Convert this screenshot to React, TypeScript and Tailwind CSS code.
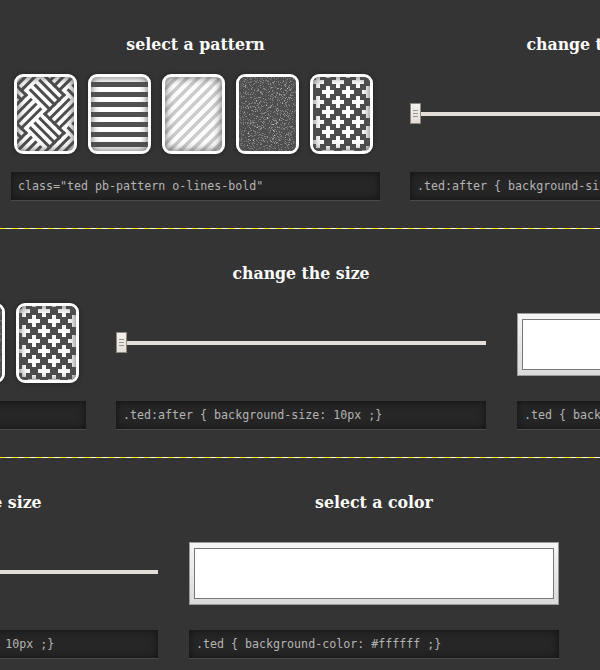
import type { ReactNode } from 'react';

// small seeded generator so the noise tile is the same on every run
function makeNoise(count: number) {
  const dots: { x: number; y: number; o: number }[] = [];
  let seed = 7;
  const next = () => {
    seed = (seed * 16807) % 2147483647;
    return seed / 2147483647;
  };
  for (let i = 0; i < count; i++) {
    dots.push({ x: Math.floor(next() * 57), y: Math.floor(next() * 74), o: 0.08 + next() * 0.3 });
  }
  return dots;
}

function Sayagata() {
  const u = 6.7;
  const lines: string[] = [];
  for (let i = -3; i <= 3; i++) {
    for (let j = -3; j <= 3; j++) {
      for (let k = 0; k < 4; k++) {
        if ((i + j + 100) % 2 === 0) {
          lines.push(`M${i * 4 * u} ${(j * 4 + k) * u} H${(i + 1) * 4 * u}`);
        } else {
          lines.push(`M${(i * 4 + k) * u} ${j * 4 * u} V${(j + 1) * 4 * u}`);
        }
      }
    }
  }
  return (
    <svg width="57" height="74" viewBox="0 0 57 74" className="block">
      <rect width="57" height="74" fill="#fff" />
      <g transform="translate(28 37) rotate(45)" stroke="#4d4d4d" strokeWidth="3" fill="none" strokeLinecap="square">
        {lines.map((d) => (
          <path key={d} d={d} />
        ))}
      </g>
    </svg>
  );
}

function Lines() {
  const rows = [5, 15, 25, 35, 45, 55, 65];
  return (
    <svg width="57" height="74" viewBox="0 0 57 74" className="block">
      <rect width="57" height="74" fill="#fff" />
      {rows.map((y) => (
        <rect key={y} x="0" y={y} width="57" height="5" fill="#505050" />
      ))}
    </svg>
  );
}

function Diagonal() {
  return (
    <svg width="57" height="74" viewBox="0 0 57 74" className="block">
      <rect width="57" height="74" fill="#fff" />
      <g stroke="#cbcbcb" strokeWidth="3.5">
        {Array.from({ length: 16 }, (_, i) => (
          <line key={i} x1={-90 + i * 11} y1="80" x2={-4 + i * 11} y2="-6" />
        ))}
      </g>
    </svg>
  );
}

function Noise() {
  return (
    <svg width="57" height="74" viewBox="0 0 57 74" className="block">
      <rect width="57" height="74" fill="#4e4e4e" />
      {makeNoise(1500).map((d, i) => (
        <rect key={i} x={d.x} y={d.y} width="1" height="1" fill="#fff" opacity={d.o} />
      ))}
    </svg>
  );
}

function Crosses() {
  const points: [number, number][] = [];
  for (let r = -1; r < 8; r++) {
    for (let c = 0; c < 4; c++) {
      points.push([(r + 2) % 2 === 0 ? 5 + c * 20 : 15 + c * 20, 5 + r * 10]);
    }
  }
  return (
    <svg width="57" height="74" viewBox="0 0 57 74" className="block">
      <rect width="57" height="74" fill="#4d4d4d" />
      {points.map(([x, y]) => (
        <path key={`${x}-${y}`} d={`M${x - 6} ${y - 2} h12 v4 h-12 z M${x - 2} ${y - 6} h4 v12 h-4 z`} fill="#fff" />
      ))}
    </svg>
  );
}

function Tile({ children }: { children: ReactNode }) {
  return (
    <div className="relative h-20 w-[63px] shrink-0 overflow-hidden rounded-[9px] border-[3px] border-white bg-[#555] shadow-[0_0_4px_rgba(0,0,0,0.4)]">
      {children}
      <div className="absolute inset-0 rounded-[6px] shadow-[inset_0_0_8px_rgba(80,80,80,0.95)]" />
    </div>
  );
}

function CodeBox({ children }: { children: ReactNode }) {
  return (
    <div className="h-[29px] overflow-hidden whitespace-pre border-b border-[#4a4a4a] bg-[#262626] pl-[7px] font-['DejaVu_Sans_Mono',monospace] text-[11.65px] leading-[28px] text-[#b4b4b4] shadow-[inset_0_0_8px_rgba(0,0,0,0.55)]">
      {children}
    </div>
  );
}

function Title({ children }: { children: ReactNode }) {
  return (
    <h2 className="flex h-[74px] justify-center pt-[32px] font-['DejaVu_Serif_Condensed','DejaVu_Serif',serif] text-[17.5px] font-bold leading-[24px] text-white">
      {children}
    </h2>
  );
}

function SizeSlider() {
  return (
    <div className="mt-[29px] flex w-full items-center">
      <div className="flex h-[21px] w-[11px] shrink-0 flex-col items-center justify-center gap-[2px] border border-[#8d8880] bg-gradient-to-b from-[#f4f1ee] to-[#e2ddd7]">
        <span className="h-px w-[5px] bg-[#99948c]" />
        <span className="h-px w-[5px] bg-[#99948c]" />
        <span className="h-px w-[5px] bg-[#99948c]" />
      </div>
      <div className="h-1 flex-1 bg-[#e4ded8]" />
    </div>
  );
}

function ColorSwatch() {
  return (
    <div className="mt-[10px] h-[63px] w-full border border-[#9a9a9a] bg-gradient-to-b from-[#f6f6f6] to-[#dadada] px-[4px] pt-[5px]">
      <div className="h-[51px] border border-[#777] bg-white" />
    </div>
  );
}

function Panels() {
  return (
    <>
      <div className="mr-[30px] w-[369px] shrink-0">
        <Title>select a pattern</Title>
        <div className="flex h-[98px] items-start gap-[11px] pl-[3px]">
          <Tile><Sayagata /></Tile>
          <Tile><Lines /></Tile>
          <Tile><Diagonal /></Tile>
          <Tile><Noise /></Tile>
          <Tile><Crosses /></Tile>
        </div>
        <CodeBox>{'class="ted pb-pattern o-lines-bold"'}</CodeBox>
      </div>
      <div className="mr-[31px] w-[370px] shrink-0">
        <Title>change the size</Title>
        <div className="flex h-[98px] items-start">
          <SizeSlider />
        </div>
        <CodeBox>{'.ted:after { background-size: 10px ;}'}</CodeBox>
      </div>
      <div className="w-[370px] shrink-0">
        <Title>select a color</Title>
        <div className="flex h-[98px] items-start">
          <ColorSwatch />
        </div>
        <CodeBox>{'.ted { background-color: #ffffff ;}'}</CodeBox>
      </div>
    </>
  );
}

function Row({ offset, line }: { offset: string; line?: boolean }) {
  return (
    <section className="flex h-[229px] flex-col overflow-hidden">
      <div className={`flex w-max flex-1 ${offset}`}>
        <Panels />
      </div>
      {line && <div className="h-px bg-[repeating-linear-gradient(90deg,#ffff00_0_6px,#ffffd0_6px_12px)]" />}
    </section>
  );
}

export default function App() {
  return (
    <div className="h-[670px] w-[600px] overflow-hidden bg-[#343434]">
      <Row offset="ml-[11px]" line />
      <Row offset="-ml-[283px]" line />
      <Row offset="-ml-[611px]" />
    </div>
  );
}
